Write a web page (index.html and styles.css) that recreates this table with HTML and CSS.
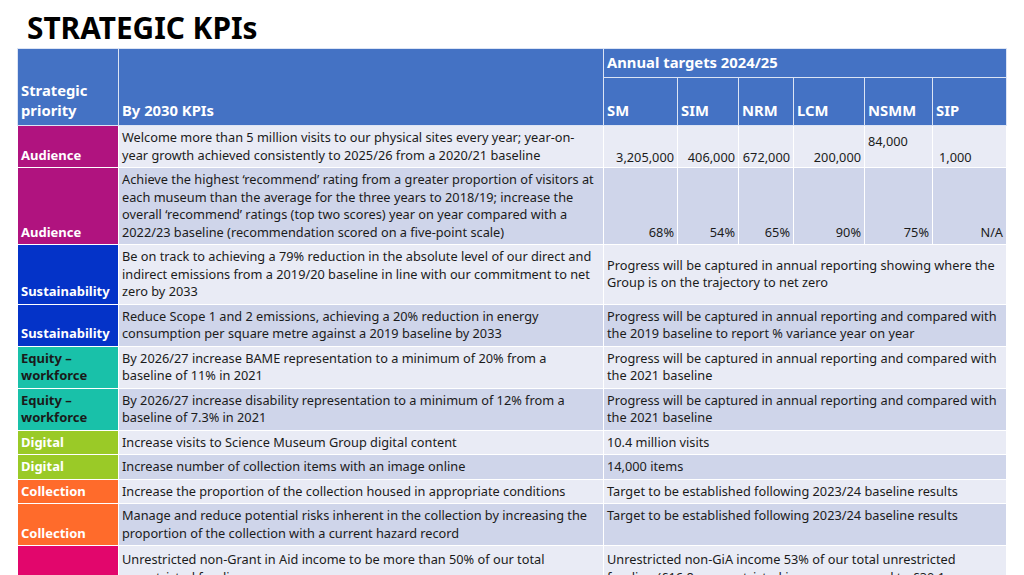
FILE: index.html
```html
<!DOCTYPE html>
<html lang="en">
<head>
<meta charset="utf-8">
<title>Strategic KPIs</title>
<link rel="stylesheet" href="styles.css">
</head>
<body>
<h1 class="title">STRATEGIC KPIs</h1>
<table class="kpi">
  <colgroup>
    <col class="c-pri"><col class="c-kpi"><col class="c-sm"><col class="c-sim"><col class="c-nrm"><col class="c-lcm"><col class="c-nsmm"><col class="c-sip">
  </colgroup>
  <thead>
    <tr class="h1">
      <th rowspan="2" class="hb">Strategic priority</th>
      <th rowspan="2" class="hb">By 2030 KPIs</th>
      <th colspan="6" class="ht">Annual targets 2024/25</th>
    </tr>
    <tr class="h2">
      <th class="hb">SM</th><th class="hb">SIM</th><th class="hb">NRM</th><th class="hb">LCM</th><th class="hb">NSMM</th><th class="hb">SIP</th>
    </tr>
  </thead>
  <tbody>
    <tr class="light">
      <td class="pri aud">Audience</td>
      <td>Welcome more than 5 million visits to our physical sites every year; year-on-year growth achieved consistently to 2025/26 from a 2020/21 baseline</td>
      <td class="num low">3,205,000</td><td class="num low">406,000</td><td class="num low">672,000</td><td class="num low">200,000</td><td class="top low">84,000</td><td class="num low left">1,000</td>
    </tr>
    <tr class="dark">
      <td class="pri aud">Audience</td>
      <td>Achieve the highest ‘recommend’ rating from a greater proportion of visitors at each museum than the average for the three years to 2018/19; increase the overall ‘recommend’ ratings (top two scores) year on year compared with a 2022/23 baseline (recommendation scored on a five-point scale)</td>
      <td class="num">68%</td><td class="num">54%</td><td class="num">65%</td><td class="num">90%</td><td class="num">75%</td><td class="num">N/A</td>
    </tr>
    <tr class="light">
      <td class="pri sus">Sustainability</td>
      <td>Be on track to achieving a 79% reduction in the absolute level of our direct and indirect emissions from a 2019/20 baseline in line with our commitment to net zero by 2033</td>
      <td colspan="6" class="mid">Progress will be captured in annual reporting showing where the Group is on the trajectory to net zero</td>
    </tr>
    <tr class="dark">
      <td class="pri sus">Sustainability</td>
      <td>Reduce Scope 1 and 2 emissions, achieving a 20% reduction in energy consumption per square metre against a 2019 baseline by 2033</td>
      <td colspan="6">Progress will be captured in annual reporting and compared with the 2019 baseline to report % variance year on year</td>
    </tr>
    <tr class="light">
      <td class="pri equ">Equity – workforce</td>
      <td>By 2026/27 increase BAME representation to a minimum of 20% from a<br>baseline of 11% in 2021</td>
      <td colspan="6">Progress will be captured in annual reporting and compared with the 2021 baseline</td>
    </tr>
    <tr class="dark">
      <td class="pri equ">Equity – workforce</td>
      <td>By 2026/27 increase disability representation to a minimum of 12% from a<br>baseline of 7.3% in 2021</td>
      <td colspan="6">Progress will be captured in annual reporting and compared with the 2021 baseline</td>
    </tr>
    <tr class="light">
      <td class="pri dig">Digital</td>
      <td>Increase visits to Science Museum Group digital content</td>
      <td colspan="6">10.4 million visits</td>
    </tr>
    <tr class="dark">
      <td class="pri dig">Digital</td>
      <td>Increase number of collection items with an image online</td>
      <td colspan="6">14,000 items</td>
    </tr>
    <tr class="light">
      <td class="pri col">Collection</td>
      <td>Increase the proportion of the collection housed in appropriate conditions</td>
      <td colspan="6">Target to be established following 2023/24 baseline results</td>
    </tr>
    <tr class="dark">
      <td class="pri col">Collection</td>
      <td>Manage and reduce potential risks inherent in the collection by increasing the proportion of the collection with a current hazard record</td>
      <td colspan="6">Target to be established following 2023/24 baseline results</td>
    </tr>
    <tr class="light funding">
      <td class="pri fun">Funding</td>
      <td>Unrestricted non-Grant in Aid income to be more than 50% of our total unrestricted funding</td>
      <td colspan="6">Unrestricted non-GiA income 53% of our total unrestricted funding (£16.8m unrestricted income compared to £30.1m unrestricted GiA)</td>
    </tr>
  </tbody>
</table>
</body>
</html>
```
FILE: styles.css
```css
html, body {
  margin: 0;
  padding: 0;
  background: #ffffff;
}

body {
  font-family: "Noto Sans", "Open Sans", "Liberation Sans", sans-serif;
  color: #1b1b1b;
}

.title {
  margin: 0;
  padding: 9px 0 0 27px;
  height: 48px;
  box-sizing: border-box;
  font-size: 29.8px;
  line-height: 38px;
  font-weight: 700;
  color: #000;
}

.kpi {
  margin-left: 17px;
  width: 989px;
  table-layout: fixed;
  border-collapse: collapse;
  font-size: 12.75px;
  line-height: 17.5px;
}

.c-pri { width: 101px; }
.c-kpi { width: 485px; }
.c-sm { width: 74px; }
.c-sim { width: 61px; }
.c-nrm { width: 55px; }
.c-lcm { width: 71px; }
.c-nsmm { width: 68px; }
.c-sip { width: 74px; }

.kpi th,
.kpi td {
  border: 1.5px solid #ffffff;
  padding: 3px;
  vertical-align: top;
  text-align: left;
}

.kpi th {
  background: #4472c4;
  color: #ffffff;
  font-weight: 700;
  font-size: 14.8px;
  line-height: 20px;
  border-color: #dce4f4;
}

.kpi .h1 { height: 29px; }
.kpi .h2 { height: 48px; }

.kpi th.hb { vertical-align: bottom; padding-bottom: 5px; }
.kpi th.ht { vertical-align: top; padding-top: 3px; }

.light td { background: #e9ebf5; }
.dark td { background: #cfd5ea; }

.kpi td.pri {
  vertical-align: bottom;
  font-weight: 700;
  font-size: 13px;
  color: #ffffff;
}

.kpi td.aud { background: #b0137f; }
.kpi td.sus { background: #0433c8; }
.kpi td.equ { background: #19c1a9; color: #1a1a1a; vertical-align: top; }
.kpi td.dig { background: #9aca27; }
.kpi td.col { background: #ff6b2b; }
.kpi td.fun { background: #e2066c; }

.kpi td.num {
  vertical-align: bottom;
  text-align: right;
}

.kpi td.num.left {
  text-align: left;
  padding-left: 6px;
}

.kpi td.top { vertical-align: top; }

.kpi td.num.low { vertical-align: top; padding-top: 22.5px; padding-bottom: 0; }
.kpi td.top.low { padding-top: 7px; }

.kpi td.mid { vertical-align: middle; }

.funding td { padding-top: 5px; }
.funding td.pri { padding-top: 3px; }
```
